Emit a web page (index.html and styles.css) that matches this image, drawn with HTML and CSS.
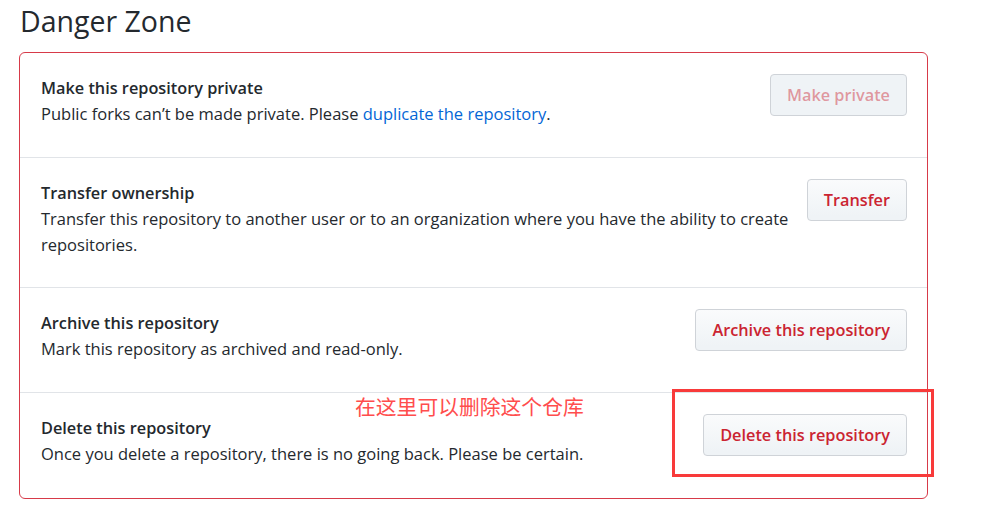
FILE: index.html
```
<!DOCTYPE html>
<html>
<head>
<meta charset="utf-8">
<link rel="stylesheet" href="styles.css">
</head>
<body>
<div class="page">
  <h2 class="heading">Danger Zone</h2>
  <div class="zone">
    <div class="row">
      <div class="info">
        <div class="title">Make this repository private</div>
        <div class="desc">Public forks can’t be made private. Please <a class="link" href="#">duplicate the repository</a>.</div>
      </div>
      <button class="btn disabled">Make private</button>
    </div>
    <div class="row">
      <div class="info">
        <div class="title">Transfer ownership</div>
        <div class="desc">Transfer this repository to another user or to an organization where you have the ability to create repositories.</div>
      </div>
      <button class="btn">Transfer</button>
    </div>
    <div class="row">
      <div class="info">
        <div class="title">Archive this repository</div>
        <div class="desc">Mark this repository as archived and read-only.</div>
      </div>
      <button class="btn">Archive this repository</button>
    </div>
    <div class="row">
      <div class="info">
        <div class="title">Delete this repository</div>
        <div class="desc">Once you delete a repository, there is no going back. Please be certain.</div>
      </div>
      <button class="btn">Delete this repository</button>
    </div>
  </div>
  <div class="note">在这里可以删除这个仓库</div>
  <div class="mark"></div>
</div>
</body>
</html>
```
FILE: styles.css
```
* { box-sizing: border-box; }
html, body { margin: 0; padding: 0; background: #fff; }
body {
  font-family: "Open Sans", "Noto Sans", sans-serif;
  color: #24292e;
  width: 992px;
  height: 515px;
  overflow: hidden;
}
.page {
  position: relative;
  padding: 0 65px 0 19px;
}
.heading {
  margin: 0;
  padding: 4px 0 0 1px;
  height: 52px;
  font-size: 28.5px;
  font-weight: 400;
  line-height: 34px;
  color: #24292e;
}
.zone {
  border: 1px solid #d73a49;
  border-radius: 6px;
  width: 909px;
}
.row {
  display: flex;
  align-items: flex-start;
  justify-content: space-between;
  padding: 22px 20px 29px 21px;
  border-top: 1px solid #e1e4e8;
  gap: 14px;
}
.row:first-child { border-top: 0; padding-top: 22px; padding-bottom: 30px; }
.row:nth-child(3) { padding-bottom: 30px; }
.row:nth-child(4) { padding-bottom: 31px; }
.info { flex: 1; }
.title {
  font-size: 16.3px;
  font-weight: 600;
  line-height: 26px;
}
.desc {
  font-size: 16.5px;
  line-height: 26px;
}
.link { color: #0366d6; text-decoration: none; }
.btn {
  flex: none;
  font-family: inherit;
  font-size: 16.3px;
  font-weight: 600;
  color: #cb2431;
  background: linear-gradient(#fafbfc, #eff3f6 90%);
  border: 1px solid #cfd3d8;
  border-radius: 4px;
  height: 42px;
  padding: 0 16px;
  margin-top: -1px;
  white-space: nowrap;
}
.btn.disabled {
  color: rgba(203, 36, 49, 0.45);
  background: #eff3f6;
}
.note {
  position: absolute;
  left: 355px;
  top: 392px;
  font-family: "Noto Sans CJK SC", sans-serif;
  font-size: 20.8px;
  line-height: 28px;
  color: #ff4d4d;
}
.mark {
  position: absolute;
  left: 672px;
  top: 389px;
  width: 262px;
  height: 88px;
  border: 3px solid #f83a3a;
}
```
